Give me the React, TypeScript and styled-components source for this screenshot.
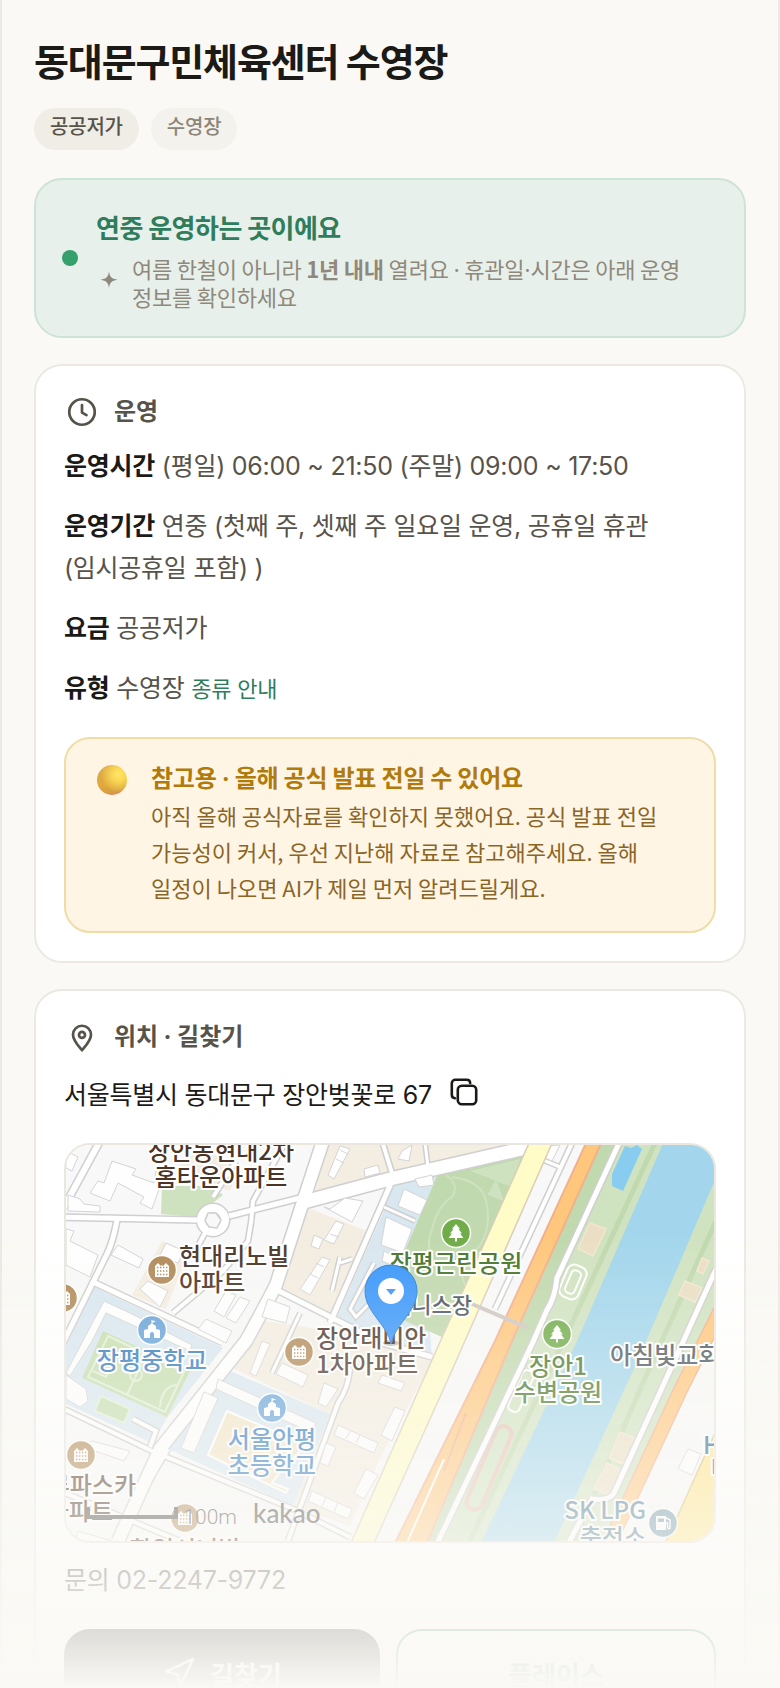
import React from "react";
import styled, { createGlobalStyle, css } from "styled-components";

const GlobalStyle = createGlobalStyle`
    * {
        box-sizing: border-box;
    }

    body {
        margin: 0;
        background-color: #faf9f5;
        color: #1c1a16;
        font-family: "Noto Sans CJK KR", sans-serif;
        word-break: keep-all;
    }

    h1, h2, p {
        margin: 0;
    }
`

const bodyText = css`
    font-family: Inter, "Noto Sans CJK KR", sans-serif;
    font-size: 25px;
    line-height: 42px;
    letter-spacing: -0.01em;
`

const PageWrapper = styled.main`
    position: relative;
    height: 100vh;
    overflow: hidden;
    padding: 36px 32px 0;
    border-left: 2px solid #ebe9e1;
    border-right: 2px solid #ebe9e1;
`

// Soft fade over the bottom of the preview
const BottomFade = styled.div`
    position: fixed;
    left: 0;
    right: 0;
    bottom: 0;
    height: 456px;
    background: linear-gradient(to bottom, rgba(250, 249, 245, 0), #faf9f5);
    pointer-events: none;
`

const Title = styled.h1`
    font-size: 38px;
    line-height: 48px;
    font-weight: 700;
    letter-spacing: -0.03em;
`

const ChipList = styled.div`
    display: flex;
    gap: 12px;
    margin-top: 24px;
`

const Chip = styled.span<{ $muted?: boolean }>`
    padding: 3px 16px 9px;
    border-radius: 21px;
    font-size: 20px;
    line-height: 30px;
    letter-spacing: -0.01em;
    font-weight: 500;
    background-color: ${props => props.$muted ? "#f3f2ed" : "#efede6"};
    color: ${props => props.$muted ? "#8c867a" : "#57534a"};
`

// Narrow middle dot, the Korean font has a wide one
const Dot = styled.span`
    font-family: Inter, sans-serif;
    line-height: 1;
`

const StatusBanner = styled.section`
    display: flex;
    align-items: center;
    gap: 18px;
    margin-top: 28px;
    padding: 22px 26px;
    border: 2px solid #cde3d7;
    border-radius: 28px;
    background-color: #e8f0eb;

    & > .dot {
        flex: none;
        width: 16px;
        height: 16px;
        border-radius: 50%;
        background-color: #35a06c;
    }

    & > .text {
        padding-bottom: 4px;
    }

    & .title {
        margin-bottom: 2px;
        font-size: 26px;
        line-height: 50px;
        font-weight: 700;
        letter-spacing: -0.02em;
        color: #2f7d5b;
    }

    & .desc {
        display: flex;
        align-items: center;
        gap: 10px;
        font-size: 22px;
        line-height: 28px;
        letter-spacing: -0.01em;
        color: #8f887b;
    }

    & .desc > svg {
        flex: none;
    }
`

const Card = styled.section`
    margin-top: 26px;
    padding: 28px;
    border: 2px solid #ebe9e1;
    border-radius: 28px;
    background-color: #fff;
`

const CardHeading = styled.h2`
    display: flex;
    align-items: flex-start;
    gap: 14px;
    margin-bottom: 15px;
    font-size: 24px;
    line-height: 32px;
    font-weight: 700;
    color: #57534a;
`

const InfoList = styled.div`
    display: flex;
    flex-direction: column;
    gap: 18px;
`

const InfoRow = styled.p`
    ${bodyText}
    color: #57534a;

    & > strong {
        font-weight: 700;
        color: #1c1a16;
    }

    & > a {
        font-size: 22px;
        color: #2f7d5b;
        text-decoration: none;
    }
`

const Notice = styled.div`
    display: flex;
    gap: 21px;
    margin-top: 27px;
    padding: 23px 28px 26px;
    border: 2px solid #efdca6;
    border-radius: 26px;
    background-color: #fff5e5;
    font-size: 22px;
    line-height: 36px;
    color: #8a6526;

    & .title {
        margin-bottom: 5px;
        font-size: 24px;
        line-height: 30px;
        font-weight: 700;
        letter-spacing: -0.01em;
        color: #b07a0c;
    }
`

const Orb = styled.span`
    flex: none;
    width: 30px;
    height: 30px;
    margin: 3px;
    border-radius: 50%;
    background:
        radial-gradient(circle at 72% 32%, #ffe566 0, #fddb58 18%, rgba(240, 190, 70, 0) 60%),
        linear-gradient(170deg, #d9ab4c 0, #e0a83c 60%, #d8a040 82%, #dc7c68 100%);
`

const Address = styled.div`
    ${bodyText}
    display: flex;
    align-items: center;
    gap: 18px;
    line-height: 50px;
`

const CopyButton = styled.button`
    display: flex;
    padding: 0 0 6px;
    border: none;
    background: none;
    color: #1c1a16;
    cursor: pointer;
`

const MapFrame = styled.div`
    height: 400px;
    margin-top: 23px;
    border: 2px solid #ebe7df;
    border-radius: 26px;
    overflow: hidden;

    & > svg {
        display: block;
        width: 100%;
        height: 100%;
    }
`

const Phone = styled.p`
    ${bodyText}
    margin-top: 16px;
    color: #57534a;
`

const ActionList = styled.div`
    display: grid;
    grid-template-columns: minmax(0, 79fr) minmax(0, 80fr);
    gap: 16px;
    margin-top: 28px;
`

const ActionButton = styled.button<{ $primary?: boolean }>`
    display: flex;
    align-items: center;
    justify-content: center;
    gap: 14px;
    height: 88px;
    border: 2px solid ${props => props.$primary ? "#1c1a16" : "#32865f"};
    border-radius: 26px;
    background-color: ${props => props.$primary ? "#1c1a16" : "#fff"};
    color: ${props => props.$primary ? "#fff" : "#2f7d5b"};
    font-family: inherit;
    font-size: 26px;
    font-weight: 700;
    cursor: pointer;
`

const MapLabel = styled.text<{ $color: string; $small?: boolean }>`
    font-family: "Noto Sans CJK KR", sans-serif;
    font-size: ${props => props.$small ? "22px" : "24px"};
    font-weight: 500;
    fill: ${props => props.$color};
    stroke: #fff;
    stroke-width: 4px;
    stroke-linejoin: round;
    paint-order: stroke;
`

const MapCredit = styled.text<{ $light?: boolean }>`
    font-family: ${props => props.$light ? "Roboto" : "Lato"}, sans-serif;
    font-size: ${props => props.$light ? "21px" : "26px"};
    font-weight: ${props => props.$light ? 300 : 500};
    fill: #444;
`

const ClockIcon = () => (
    <svg width="36" height="36" viewBox="0 0 24 24" fill="none" stroke="currentColor" strokeWidth="1.8" strokeLinecap="round" strokeLinejoin="round">
        <circle cx="12" cy="12" r="8.5" />
        <path d="M12 7.4v5l3 1.7" />
    </svg>
)

const PinIcon = () => (
    <svg width="36" height="36" viewBox="0 0 24 24" fill="none" stroke="currentColor" strokeWidth="1.8" strokeLinecap="round" strokeLinejoin="round">
        <path d="M12 20.8c-2.6-3.1-6-6.5-6-10.3a6 6 0 0 1 12 0c0 3.8-3.4 7.2-6 10.3z" />
        <circle cx="12" cy="10.6" r="2" />
    </svg>
)

const SparkleIcon = () => (
    <svg width="26" height="26" viewBox="0 0 26 26" fill="currentColor">
        <path d="M13 2.5c.9 5.6 2.4 7.2 8.500 8.200-6.100 1-7.600 2.600-8.500 8.300-.9-5.700-2.400-7.300-8.500-8.300 6.100-1 7.600-2.600 8.500-8.200z" />
    </svg>
)

const CopyIcon = () => (
    <svg width="28" height="28" viewBox="0 0 28 28" fill="none" stroke="currentColor" strokeWidth="2.6" strokeLinecap="round" strokeLinejoin="round">
        <rect x="7.8" y="7.8" width="18.4" height="18.4" rx="4" />
        <path d="M5 20.2a3.5 3.5 0 0 1-3.2-3.5V5.3a3.5 3.5 0 0 1 3.5-3.5h11.4a3.5 3.5 0 0 1 3.5 3.2" />
    </svg>
)

const NavigationIcon = () => (
    <svg width="34" height="34" viewBox="0 0 24 24" fill="none" stroke="currentColor" strokeWidth="1.8" strokeLinecap="round" strokeLinejoin="round">
        <path d="M3 11 22 2l-9 19-2-8z" />
    </svg>
)

type MarkerType = "apt" | "school" | "park" | "gas";

const markerColors: Record<MarkerType, string> = {
    apt: "#b18a58",
    school: "#66a2d8",
    park: "#70ac48",
    gas: "#6d94a8"
}

const MapMarker = ({ x, y, type }: { x: number; y: number; type: MarkerType }) => (
    <g transform={`translate(${x} ${y})`}>
        <circle r="14.5" fill={markerColors[type]} stroke="#fff" strokeWidth="1.5" />
        {type === "apt" && (
            <>
                <path d="M-7 7v-11l3-3 3 3 1-1 1 1 3-3 3 3V7z" fill="#fff" />
                <path d="M-5-2.5H6M-5 1H6M-5 4.5H6" stroke={markerColors.apt} strokeWidth="1.4" strokeDasharray="1.4 1.6" />
            </>
        )}
        {type === "school" && (
            <path d="M-8 8V0l4-1v-3l3.5-2.5V-10l4.5 1.5-3.5 1.3v.9L4-4v3l4 1v8H2V4a2 2 0 0 0-4 0v4z" fill="#fff" />
        )}
        {type === "park" && (
            <path d="M0-9l4 5H2.5L6 .5H4L7.5 5H1v3.5h-2V5h-6.5L-4 .5h-2L-2.5-4H-4z" fill="#fff" />
        )}
        {type === "gas" && (
            <>
                <path d="M-7 7V-7H3V7z" fill="#fff" />
                <path d="M-5-4.5H1v3.5h-6z" fill={markerColors.gas} />
                <path d="M3-5l4 2v8q-2 2-2.5-1V0H3" fill="none" stroke="#fff" strokeWidth="1.5" />
            </>
        )}
    </g>
)

// Local streets: drawn twice, grey casing first and white on top
const streets = [
    { d: "M60 1216 197 1219", w: 5 },
    { d: "M100 1140 64 1206", w: 6 },
    { d: "M117 1219q-4 22-10 34L58 1352", w: 5 },
    { d: "M93 1281 223 1342", w: 5 },
    { d: "M286 1140 253 1200q-1 20-5 40l-25 30-50 42", w: 4 },
    { d: "M213 1196 236 1160", w: 4 },
    { d: "M205 1232 192 1256", w: 4 },
    { d: "M229 1215 304 1196", w: 5 },
    { d: "M382 1140 392 1172", w: 4 },
    { d: "M425 1142 428 1166", w: 3 },
    { d: "M392 1180 330 1322", w: 5 },
    { d: "M384 1206 415 1220", w: 3 },
    { d: "M277 1289 382 1342 432 1356", w: 5 },
    { d: "M262 1312 240 1354", w: 4 },
    { d: "M300 1312 272 1372", w: 3 },
    { d: "M60 1406 152 1450 293 1508 350 1536", w: 4 },
    { d: "M133 1418 156 1430 150 1446", w: 4 },
    { d: "M168 1448 132 1510", w: 4 },
    { d: "M350 1368q-2 20-12 34L288 1540", w: 4 },
    { d: "M60 1490 180 1540", w: 4 },
    { d: "M340 1256 332 1290M352 1258 340 1262", w: 3 },
    { d: "M372 1300 356 1316 350 1308 374 1262", w: 3 },
    { d: "M573 1140 495 1308", w: 4 },
    { d: "M543 1159 560 1166", w: 3 },
    { d: "M323 1140 300 1210 276 1284Q268 1300 246 1340L160 1448 118 1540", w: 12 },
    { d: "M300 1202 390 1178 530 1146", w: 13 },
]

const buildings = [
    "112 1160 136 1168 132 1174 154 1182 156 1170 164 1174 152 1208 140 1202 144 1196 118 1182 110 1200 90 1192 98 1180 104 1182",
    "68 1194 80 1198 84 1203 100 1205 100 1211 68 1210",
    "66 1150 78 1156 72 1170 66 1167",
    "66 1228 74 1230 70 1240 98 1254 90 1276 66 1264",
    "118 1244 143 1258 139 1267 111 1254",
    "166 1242 184 1250 178 1262 160 1254",
    "140 1288 148 1280 168 1290 160 1306",
    "340 1145 350 1148 334 1178 328 1174",
    "364 1168 378 1164 380 1172 365 1176",
    "330 1208 345 1197 363 1200 352 1221 324 1206",
    "336 1220 344 1223 334 1243 324 1239",
    "314 1234 323 1238 319 1248 311 1245",
    "322 1256 330 1259 310 1294 300 1288",
    "226 1290 236 1294 224 1316 214 1310",
    "240 1296 250 1300 236 1322 226 1317",
    "268 1298 290 1306 286 1322 262 1316",
    "206 1318 232 1330 226 1342 198 1328",
    "402 1150 412 1144 409 1160 398 1158",
    "404 1188 427 1199 420 1214 398 1205",
    "415 1178 432 1174 434 1184 419 1186",
    "386 1216 412 1228 403 1252 381 1244",
    "384 1250 396 1256 392 1264 382 1260",
    "104 1300 130 1312 192 1344 190 1350 106 1312 92 1340 70 1375 66 1372",
    "66 1374 86 1388 88 1400 80 1406 66 1398",
    "204 1391 218 1397 194 1452 181 1447",
    "218 1378 316 1422 312 1432 216 1388",
    "262 1340 270 1343 256 1375 250 1372",
    "282 1362 308 1374 303 1386 276 1373",
    "324 1382 338 1388 326 1406 318 1402",
    "338 1424 378 1442 374 1452 334 1434",
    "326 1442 336 1446 328 1465 320 1462",
    "312 1490 352 1508 348 1518 308 1500",
    "366 1468 378 1474 364 1498 354 1492",
    "395 1406 405 1410 392 1440 381 1434",
    "382 1374 405 1382 401 1390 378 1382",
    "92 1440 130 1450 124 1460 84 1446",
    "78 1530 112 1540 74 1544",
    "716 1385 709 1398 714 1402",
    "546 1145 560 1144 552 1160 545 1157",
]

const LocationMap = () => (
    <svg viewBox="66 1144 648 396" preserveAspectRatio="xMidYMid slice" role="img" aria-label="지도">
        <path d="M66 1144h648v396H66z" fill="#f8f8f8" />

        {/* blocks */}
        <g fill="#f4ede1">
            <path d="M328 1140h202l-6 10-134 28-76 18z" />
            <path d="M308 1207 367 1230 330 1318 280 1293z" />
            <path d="M162 1240 188 1252 166 1308 132 1294z" />
            <path d="M175 1160 205 1150 240 1165 230 1190 200 1180z" />
            <path d="M253 1318 395 1340 434 1357 380 1457 350 1525 293 1505 330 1413 228 1365z" />
        </g>
        <path d="M162 1185h48l13 9-28 22-34-3z" fill="#cfe2c0" />
        <g fill="#d9e7f0">
            <path d="M390 1184 440 1173 404 1258 394 1310 430 1330 432 1357 390 1340 337 1316 383 1212z" />
            <path d="M92 1285 223 1347 167 1417 152 1442 66 1403V1340z" />
            <path d="M223 1367 330 1413 293 1505 168 1448z" />
        </g>

        {/* park */}
        <path d="M525 1155 438 1173 404 1252 394 1315 442 1336z" fill="#c1d9ae" />
        <path d="M520 1158 470 1170 512 1186zM496 1178 488 1194 504 1200z" fill="#cfe2c0" />
        <path d="M446 1174q14 10 6 22-14 8-20 32-6 16 0 26M452 1176q30 4 34 24 6 26-6 44l-20 26 8 22M488 1192l18 8" fill="none" stroke="#cfe2c0" strokeWidth="2" />

        {/* river and banks */}
        <path d="M600 1140h118v170L600 1545H424l88-205z" fill="#d0e3c0" />
        <path d="M602 1140h18L556 1278l-24 66-92 200h-16l88-204z" fill="#c1d9ae" />
        <path d="M664 1140h54v32l-76 178-89 194h-73l97-204z" fill="#a3d6ec" />
        <path d="M656 1140 584 1296 470 1540M716 1220 650 1366 574 1540" fill="none" stroke="#c1d9ae" strokeWidth="5" />
        <path d="M625 1145l6 2 6-3 5 4-19 42-11-5v-12z" fill="#88cdf0" />

        {/* sport grounds */}
        <g fill="#eadfc4" stroke="#f3e6d0" strokeWidth="1.5">
            <path d="M590 1222 606 1228 593 1255 578 1248z" />
            <path d="M702 1257 709 1260 703 1273 697 1270z" />
            <path d="M685 1280 702 1287 695 1301 679 1294z" />
            <path d="M620 1431 636 1438 624 1463 609 1457z" />
            <path d="M607 1462 622 1469 610 1494 594 1488z" />
        </g>
        <g fill="none" transform="rotate(23 573 1281)">
            <rect x="563" y="1264" width="20" height="34" rx="7" stroke="#fff" strokeWidth="2" />
            <rect x="568" y="1269" width="10" height="24" rx="4" stroke="#fff" strokeWidth="2" />
        </g>
        <rect x="515" y="1368" width="12" height="44" rx="5" fill="none" stroke="#fff" strokeWidth="2" transform="rotate(24 521 1390)" />
        <rect x="481" y="1422" width="16" height="90" rx="8" fill="none" stroke="#e6c2b5" strokeWidth="4" transform="rotate(23 489 1467)" />
        <path d="M103 1330 190 1370 167 1416 82 1377z" fill="#c5deae" />
        <path d="M108 1335 184 1371 165 1411 88 1376zM146 1353l-19 41M100 1352l14 7-8 17-13-6M178 1384q-16 0-18 22" fill="none" stroke="#e2efd5" strokeWidth="2" />
        <circle cx="136" cy="1374" r="6" fill="none" stroke="#e2efd5" strokeWidth="2" />
        <path d="M101 1395 130 1408 124 1422 95 1410z" fill="#c5deae" stroke="#e2efd5" strokeWidth="2" />
        <path d="M227 1410 306 1444 276 1476 272 1482 288 1488 286 1492 208 1454z" fill="#f2e5c6" stroke="#fff" strokeWidth="2" />

        {/* streets */}
        <g fill="none" stroke="#cfcfcf">
            {streets.map(street => <path key={street.d} d={street.d} strokeWidth={street.w + 3} />)}
            <circle cx="213" cy="1219" r="12" strokeWidth="11" />
        </g>
        <g fill="none" stroke="#fff">
            {streets.map(street => <path key={street.d} d={street.d} strokeWidth={street.w} />)}
            <circle cx="213" cy="1219" r="12" strokeWidth="8" />
        </g>
        <path d="M208 1212h8l5 7-4 8-8-1-4-6z" fill="#f8f8f8" stroke="#cfcfcf" strokeWidth="1.5" />

        <g fill="#fefefe" stroke="#d4d4d4" strokeWidth="1">
            {buildings.map(points => <polygon key={points} points={points} />)}
        </g>
        <path d="M344 1162l-8-4M348 1153l-8-4M330 1233l9 3M324 1266l-8-4M318 1277l-8-4M350 1430l-4 8M360 1434l-4 8M326 1496l-4 9M338 1502l-4 9" stroke="#d4d4d4" />

        {/* main roads */}
        <path d="M530 1140h23l-100 227-80 177h-23l86-194z" fill="#fffcc8" stroke="#d9cfb8" strokeWidth="1.5" />
        <path d="M587 1140h15l-90 200-86 204h-32l101-204z" fill="#ffc77c" stroke="#f3b08c" strokeWidth="2" />
        <path d="M466 1412 444 1470" fill="none" stroke="#f3b08c" strokeWidth="2" />
        <path d="M444 1458 406 1544" fill="none" stroke="#fff" strokeWidth="2" />
        <g fill="none">
            <path d="M620 1140 557 1277q-2 20-10 32l-14 32-97 204" stroke="#cfcfcf" strokeWidth="8" />
            <path d="M620 1140 557 1277q-2 20-10 32l-14 32-97 204" stroke="#fff" strokeWidth="5" />
            <path d="M716 1268 682 1343 614 1492q-4 8-22 6L567 1545" stroke="#cfcfcf" strokeWidth="8" />
            <path d="M716 1268 682 1343 614 1492q-4 8-22 6L567 1545" stroke="#fff" strokeWidth="5" />
            <path d="M720 1310 680 1390 628 1502 608 1545" stroke="#f3b08c" strokeWidth="15" />
            <path d="M720 1310 680 1390 628 1502 608 1545" stroke="#ffc77c" strokeWidth="12" />
            <path d="M472 1303 528 1327" stroke="#cfc8c1" strokeWidth="4" />
        </g>
        <path d="M720 1330 690 1390 620 1545h52l48-110z" fill="#f8f8f8" />
        <path d="M716 1430 664 1545h52z" fill="#ffe68a" stroke="#d8c27a" strokeWidth="1.5" />
        <path d="M688 1448 701 1453 692 1474 678 1468z" fill="#fefefe" stroke="#d4d4d4" />

        {/* place markers */}
        <MapMarker type="apt" x={162} y={1269} />
        <MapMarker type="apt" x={63} y={1297} />
        <MapMarker type="apt" x={299} y={1351} />
        <MapMarker type="apt" x={81} y={1454} />
        <MapMarker type="apt" x={185} y={1517} />
        <MapMarker type="school" x={152} y={1329} />
        <MapMarker type="school" x={272} y={1407} />
        <MapMarker type="park" x={456} y={1232} />
        <MapMarker type="park" x={557} y={1333} />
        <MapMarker type="gas" x={663} y={1522} />

        {/* labels */}
        <MapLabel $color="#4c3526" textAnchor="middle" x="221" y="1159">장안동현대2차</MapLabel>
        <MapLabel $color="#4c3526" textAnchor="middle" x="221" y="1185">홈타운아파트</MapLabel>
        <MapLabel $color="#4c3526" x="179" y="1264">현대리노빌</MapLabel>
        <MapLabel $color="#4c3526" x="179" y="1290">아파트</MapLabel>
        <MapLabel $color="#2f78bf" textAnchor="middle" x="152" y="1368">장평중학교</MapLabel>
        <MapLabel $color="#4c3526" x="316" y="1346">장안래미안</MapLabel>
        <MapLabel $color="#4c3526" x="316" y="1372">1차아파트</MapLabel>
        <MapLabel $color="#2f78bf" textAnchor="middle" x="272" y="1447">서울안평</MapLabel>
        <MapLabel $color="#2f78bf" textAnchor="middle" x="272" y="1473">초등학교</MapLabel>
        <MapLabel $color="#4c3526" textAnchor="end" x="136" y="1493">루파스카</MapLabel>
        <MapLabel $color="#4c3526" textAnchor="end" x="113" y="1519">아파트</MapLabel>
        <MapLabel $color="#4c3526" textAnchor="middle" x="185" y="1557">한일시니빌</MapLabel>
        <MapLabel $color="#47752a" textAnchor="middle" x="456" y="1271">장평근린공원</MapLabel>
        <MapLabel $small $color="#4a555e" textAnchor="end" x="472" y="1312">테니스장</MapLabel>
        <MapLabel $color="#47752a" textAnchor="middle" x="558" y="1374">장안1</MapLabel>
        <MapLabel $color="#47752a" textAnchor="middle" x="558" y="1400">수변공원</MapLabel>
        <MapLabel $color="#4a555e" x="610" y="1363">아침빛교회</MapLabel>
        <MapLabel $color="#4a7890" textAnchor="end" x="646" y="1518">SK LPG</MapLabel>
        <MapLabel $color="#4a7890" textAnchor="end" x="646" y="1545">충전소</MapLabel>
        <MapLabel $color="#33688a" x="703" y="1453">H</MapLabel>
        <MapLabel $color="#33688a" x="711" y="1476">마</MapLabel>

        {/* selected place */}
        <ellipse cx="391" cy="1342" rx="8" ry="3" fill="#000" opacity="0.25" />
        <path d="M391 1343c-4-20-26-32-26-53a26 26 0 0 1 52 0c0 21-22 33-26 53z" fill="#3a97fb" stroke="#2a7cd8" strokeWidth="1" />
        <circle cx="391" cy="1290" r="13" fill="#fff" />
        <path d="M386 1288h10l-5 6z" fill="#3a97fb" />

        <path d="M88 1506v10h88v-10" fill="none" stroke="#444" strokeWidth="4" />
        <MapCredit $light textAnchor="end" x="237" y="1523">100m</MapCredit>
        <MapCredit x="253" y="1522">kakao</MapCredit>
    </svg>
)

export default class App extends React.Component {
    render() {
        return (
            <PageWrapper>
                <GlobalStyle />
                <Title>동대문구민체육센터 수영장</Title>
                <ChipList>
                    <Chip>공공저가</Chip>
                    <Chip $muted>수영장</Chip>
                </ChipList>

                <StatusBanner>
                    <span className="dot" />
                    <div className="text">
                        <p className="title">연중 운영하는 곳이에요</p>
                        <div className="desc">
                            <SparkleIcon />
                            <p>여름 한철이 아니라 <b>1년 내내</b> 열려요 <Dot>·</Dot> 휴관일<Dot>·</Dot>시간은 아래 운영 정보를 확인하세요</p>
                        </div>
                    </div>
                </StatusBanner>

                <Card>
                    <CardHeading><ClockIcon />운영</CardHeading>
                    <InfoList>
                        <InfoRow><strong>운영시간</strong> (평일) 06:00 ~ 21:50 (주말) 09:00 ~ 17:50</InfoRow>
                        <InfoRow><strong>운영기간</strong> 연중 (첫째 주, 셋째 주 일요일 운영, 공휴일 휴관(임시공휴일 포함) )</InfoRow>
                        <InfoRow><strong>요금</strong> 공공저가</InfoRow>
                        <InfoRow><strong>유형</strong> 수영장 <a href="#types">종류 안내</a></InfoRow>
                    </InfoList>
                    <Notice>
                        <Orb />
                        <div>
                            <p className="title">참고용 <Dot>·</Dot> 올해 공식 발표 전일 수 있어요</p>
                            <p>아직 올해 공식자료를 확인하지 못했어요. 공식 발표 전일 가능성이 커서, 우선 지난해 자료로 참고해주세요. 올해 일정이 나오면 AI가 제일 먼저 알려드릴게요.</p>
                        </div>
                    </Notice>
                </Card>

                <Card>
                    <CardHeading><PinIcon /><span>위치 <Dot>·</Dot> 길찾기</span></CardHeading>
                    <Address>
                        서울특별시 동대문구 장안벚꽃로 67
                        <CopyButton type="button" aria-label="주소 복사"><CopyIcon /></CopyButton>
                    </Address>
                    <MapFrame><LocationMap /></MapFrame>
                    <Phone>문의 02-2247-9772</Phone>
                    <ActionList>
                        <ActionButton type="button" $primary><NavigationIcon />길찾기</ActionButton>
                        <ActionButton type="button">플레이스</ActionButton>
                    </ActionList>
                </Card>
                <BottomFade />
            </PageWrapper>
        )
    }
}
